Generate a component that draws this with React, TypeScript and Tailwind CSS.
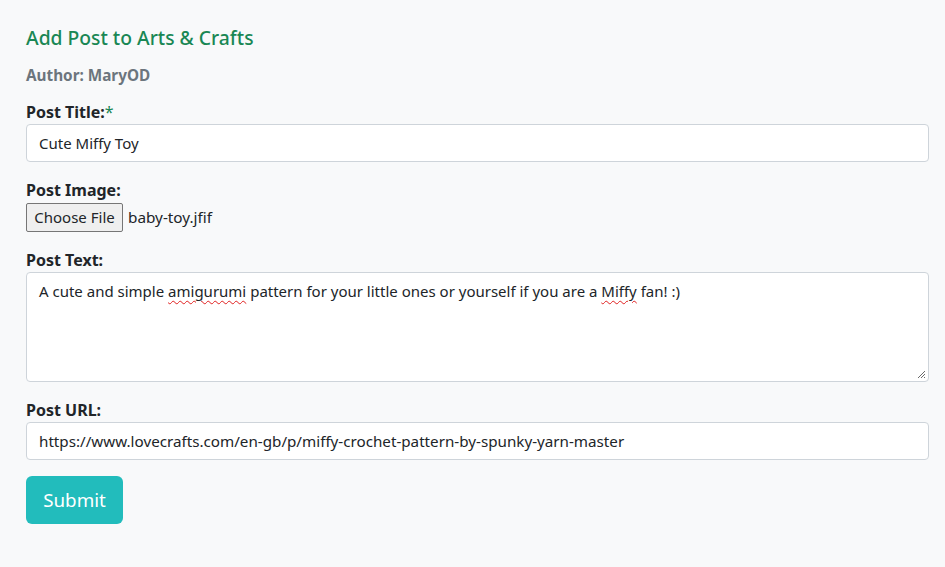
import { useState } from 'react'

function Label({ children, required }: { children: string; required?: boolean }) {
  return (
    <label className="block h-6 text-base font-bold leading-6 text-[#212529]">
      {children}
      {required && <span className="font-normal text-[#198754]">*</span>}
    </label>
  )
}

function ResizeGrip() {
  return (
    <svg className="absolute bottom-[2px] right-[2px]" width="9" height="9" viewBox="0 0 9 9">
      <path d="M8 1 L1 8 M8 4 L4 8 M8 7 L7 8" stroke="#6b6b6b" strokeWidth="1" fill="none" />
    </svg>
  )
}

export default function App() {
  const [title, setTitle] = useState('Cute Miffy Toy')
  const [url, setUrl] = useState('https://www.lovecrafts.com/en-gb/p/miffy-crochet-pattern-by-spunky-yarn-master')

  const squiggle = 'underline decoration-wavy decoration-[#e02020] decoration-1 underline-offset-[3px]'

  return (
    <div className="min-h-[567px] bg-[#f8f9fa] px-[26px] pt-[26px] font-['Noto_Sans','Open_Sans',sans-serif] text-[#212529]">
      <h5 className="h-6 text-[19.3px] font-medium leading-6 text-[#198754]">Add Post to Arts &amp; Crafts</h5>
      <p className="mt-[13px] h-6 text-[15.3px] font-bold leading-6 text-[#6c757d]">Author: MaryOD</p>

      <form className="mt-[13px] w-[903px]" onSubmit={(e) => e.preventDefault()}>
        <div className="mb-4">
          <Label required>Post Title:</Label>
          <input
            value={title}
            onChange={(e) => setTitle(e.target.value)}
            className="block h-[38px] w-full rounded-[4px] border border-[#ced4da] bg-white px-3 text-[15px] text-[#212529] outline-none"
          />
        </div>

        <div className="mb-4">
          <Label>Post Image:</Label>
          <div className="flex h-[30px] items-center">
            <button
              type="button"
              className="h-[29px] w-[97px] rounded-[2px] border border-[#767676] bg-[#efefef] text-[15px] text-[#212529]"
            >
              Choose File
            </button>
            <span className="ml-[5px] text-[15.3px]">baby-toy.jfif</span>
          </div>
        </div>

        <div className="mb-4">
          <Label>Post Text:</Label>
          <div className="relative h-[110px] w-full rounded-[4px] border border-[#ced4da] bg-white px-3 py-[6px] text-[15px] leading-6">
            A cute and simple <span className={squiggle}>amigurumi</span> pattern for your little ones or yourself if you are a{' '}
            <span className={squiggle}>Miffy</span> fan! :)
            <ResizeGrip />
          </div>
        </div>

        <div className="mb-4">
          <Label>Post URL:</Label>
          <input
            value={url}
            onChange={(e) => setUrl(e.target.value)}
            className="block h-[38px] w-full rounded-[4px] border border-[#ced4da] bg-white px-3 text-[15.2px] text-[#212529] outline-none"
          />
        </div>

        <button
          type="submit"
          className="h-[48px] w-[97px] rounded-[6px] bg-[#22bcbc] text-[18.8px] text-white"
        >
          Submit
        </button>
      </form>
    </div>
  )
}
